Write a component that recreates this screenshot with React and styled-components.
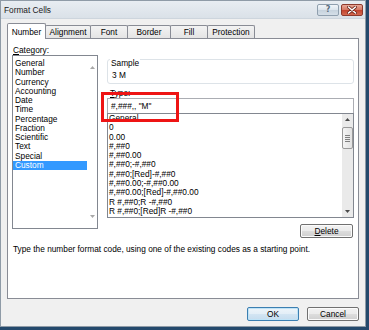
import React from "react"
import styled, { createGlobalStyle } from "styled-components"

const GlobalStyle = createGlobalStyle`
  html, body {
    margin: 0;
    padding: 0;
    background: #24496c;
  }
  body {
    font-family: "Liberation Sans", Arial, sans-serif;
    font-size: 8.3px;
    color: #000;
  }
  * { box-sizing: border-box; }
`

const tabs = [
  { title: "Number", width: 39, active: true },
  { title: "Alignment", width: 46 },
  { title: "Font", width: 38 },
  { title: "Border", width: 44 },
  { title: "Fill", width: 38 },
  { title: "Protection", width: 48 },
]

const categories = [
  "General", "Number", "Currency", "Accounting", "Date", "Time",
  "Percentage", "Fraction", "Scientific", "Text", "Special", "Custom",
]

const formats = [
  "General",
  "0",
  "0.00",
  "#,##0",
  "#,##0.00",
  "#,##0;-#,##0",
  "#,##0;[Red]-#,##0",
  "#,##0.00;-#,##0.00",
  "#,##0.00;[Red]-#,##0.00",
  "R #,##0;R -#,##0",
  "R #,##0;[Red]R -#,##0",
]

const Arrow = ({ down, faint }) => (
  <svg width="5" height="3" viewBox="0 0 5 3">
    <path
      d={down ? "M0 0 L5 0 L2.5 3 Z" : "M0 3 L5 3 L2.5 0 Z"}
      fill={faint ? "#a8a8a8" : "#4a4a4a"}
    />
  </svg>
)

const App = () => {
  return (
    <Screen>
      <GlobalStyle />
      <Window>
        <TitleBar>
          <Title>Format Cells</Title>
          <Caption>
            <CapButton>?</CapButton>
            <CapButton close>
              <svg width="10" height="8" viewBox="0 0 10 8">
                <path d="M1.5 1 L8.5 7 M8.5 1 L1.5 7" stroke="#6b2318" strokeWidth="3" strokeLinecap="round" />
                <path d="M1.5 1 L8.5 7 M8.5 1 L1.5 7" stroke="#fff" strokeWidth="1.6" strokeLinecap="round" />
              </svg>
            </CapButton>
          </Caption>
        </TitleBar>

        <Body>
          <Tabs>
            {tabs.map((t) => (
              <Tab key={t.title} $width={t.width} $active={t.active}>{t.title}</Tab>
            ))}
          </Tabs>

          <Panel>
            <Columns>
              <LeftCol>
                <Label><u>C</u>ategory:</Label>
                <CategoryBox>
                  <Items>
                    {categories.map((c) => (
                      <CategoryItem key={c} $selected={c === "Custom"}>{c}</CategoryItem>
                    ))}
                  </Items>
                  <BlankScroll>
                    <ArrowCell><Arrow faint /></ArrowCell>
                    <ArrowCell><Arrow faint down /></ArrowCell>
                  </BlankScroll>
                </CategoryBox>
              </LeftCol>

              <RightCol>
                <GroupBox>
                  <Legend>Sample</Legend>
                  <SampleValue>3 M</SampleValue>
                </GroupBox>
                <TypeLabel><u>T</u>ype:</TypeLabel>
                <TypeInput>#,###,, "M"</TypeInput>
                <FormatBox>
                  <Items>
                    {formats.map((f) => (
                      <FormatItem key={f}>{f}</FormatItem>
                    ))}
                  </Items>
                  <ScrollBar>
                    <ArrowCell><Arrow /></ArrowCell>
                    <Thumb>
                      <Grip /><Grip /><Grip /><Grip />
                    </Thumb>
                    <Spacer />
                    <ArrowCell><Arrow down /></ArrowCell>
                  </ScrollBar>
                </FormatBox>
                <DeleteButton><u>D</u>elete</DeleteButton>
              </RightCol>
            </Columns>

            <Hint>Type the number format code, using one of the existing codes as a starting point.</Hint>

            <Callout />
          </Panel>

          <Footer>
            <Button $default>OK</Button>
            <Button>Cancel</Button>
          </Footer>
        </Body>
      </Window>
    </Screen>
  )
}

export default App

const Screen = styled.div`
  width: 369px;
  height: 330px;
  overflow: hidden;
  background: #24496c;
`

const Window = styled.div`
  width: 366px;
  height: 327px;
  border: 1px solid #8f9ba7;
  background: #f0f0f0;
  display: flex;
  flex-direction: column;
`

const TitleBar = styled.div`
  height: 18px;
  display: flex;
  justify-content: space-between;
  background: linear-gradient(#e8edf2, #dae1e8);
  border-bottom: 1px solid #cdd5dd;
`

const Title = styled.div`
  padding: 5px 0 0 3px;
  font-size: 8.3px;
  line-height: 9px;
  color: #1a1a1a;
`

const Caption = styled.div`
  display: flex;
  gap: 2px;
  padding: 3px 2px 0 0;
`

const CapButton = styled.div`
  width: 22px;
  height: 12px;
  border: 1px solid ${(p) => (p.close ? "#8d3a2d" : "#8f9fae")};
  border-radius: 2px;
  background: ${(p) =>
    p.close
      ? "linear-gradient(#e8a898, #d67a66 45%, #c3452f 55%, #d3684f)"
      : "linear-gradient(#f1f5f9, #dde6ee 45%, #c7d3de 55%, #d5dfe8)"};
  display: flex;
  align-items: center;
  justify-content: center;
  font-family: "DejaVu Sans", sans-serif;
  font-weight: bold;
  font-size: 8px;
  line-height: 8px;
  color: #5b6d7d;
`

const Body = styled.div`
  padding: 4px 6px 0;
`

const Tabs = styled.div`
  display: flex;
  align-items: flex-end;
  height: 15px;
`

const Tab = styled.div`
  width: ${(p) => p.$width}px;
  height: ${(p) => (p.$active ? 16 : 13)}px;
  margin-right: -1px;
  margin-bottom: ${(p) => (p.$active ? -1 : 0)}px;
  padding-top: ${(p) => (p.$active ? 4 : 2)}px;
  position: relative;
  z-index: ${(p) => (p.$active ? 2 : 1)};
  border: 1px solid #898c95;
  border-bottom: none;
  border-radius: 2px 2px 0 0;
  background: ${(p) => (p.$active ? "#fff" : "linear-gradient(#f3f3f3, #e4e4e4)")};
  text-align: center;
  line-height: 8px;
`

const Panel = styled.div`
  position: relative;
  height: 261px;
  border: 1px solid #898c95;
  background: #fff;
  padding: 6px 4px 0;
`

const Columns = styled.div`
  display: flex;
  gap: 9px;
  align-items: flex-start;
`

const LeftCol = styled.div`
  width: 86px;
  display: flex;
  flex-direction: column;
`

const RightCol = styled.div`
  width: 247px;
  display: flex;
  flex-direction: column;
`

const Label = styled.div`
  height: 10px;
  line-height: 10px;
  padding-left: 1px;
`

const TypeLabel = styled(Label)`
  margin-top: 4px;
  padding-left: 3px;
`

const CategoryBox = styled.div`
  height: 174px;
  border: 1px solid #828790;
  display: flex;
`

const Items = styled.div`
  flex: 1;
  min-width: 0;
  overflow: hidden;
`

const CategoryItem = styled.div`
  height: 9.25px;
  line-height: 9.25px;
  padding-left: 2px;
  margin-top: ${(p) => (p.$first ? 3 : 0)}px;
  background: ${(p) => (p.$selected ? "#3399ff" : "transparent")};
  color: ${(p) => (p.$selected ? "#fff" : "#000")};
  white-space: nowrap;
  &:first-child {
    margin-top: 3px;
  }
`

const BlankScroll = styled.div`
  width: 10px;
  display: flex;
  flex-direction: column;
  justify-content: space-between;
  padding: 6px 0 6px;
`

const ArrowCell = styled.div`
  height: 11px;
  display: flex;
  align-items: center;
  justify-content: center;
`

const GroupBox = styled.div`
  position: relative;
  margin-top: 14px;
  height: 25px;
  border: 1px solid #dde3e8;
  border-radius: 3px;
  padding: 11px 0 0 4px;
`

const Legend = styled.span`
  position: absolute;
  top: -1px;
  left: 2px;
  padding: 0 1px;
  background: #fff;
  line-height: 8px;
`

const SampleValue = styled.div`
  line-height: 8px;
`

const TypeInput = styled.div`
  height: 15px;
  border: 1px solid #abadb3;
  border-bottom: none;
  padding-left: 3px;
  line-height: 14px;
  white-space: pre;
`

const FormatBox = styled.div`
  height: 105px;
  border: 1px solid #828790;
  display: flex;
`

const FormatItem = styled.div`
  height: 9.3px;
  line-height: 9.3px;
  padding-left: 1px;
  white-space: nowrap;
`

const ScrollBar = styled.div`
  width: 11px;
  background: #eaeaea;
  display: flex;
  flex-direction: column;
`

const Thumb = styled.div`
  margin-top: 2px;
  height: 22px;
  border: 1px solid #9a9a9a;
  border-radius: 2px;
  background: linear-gradient(90deg, #f4f4f4, #e2e2e2);
  display: flex;
  flex-direction: column;
  justify-content: center;
  align-items: center;
  gap: 1px;
`

const Grip = styled.div`
  width: 5px;
  height: 1px;
  background: #7f7f7f;
`

const Spacer = styled.div`
  flex: 1;
`

const Button = styled.div`
  width: 52px;
  height: 14px;
  border: 1px solid ${(p) => (p.$default ? "#3c7fb1" : "#707070")};
  border-radius: 2px;
  background: ${(p) =>
    p.$default
      ? "linear-gradient(#eef5fa, #e3eef7 50%, #d3e5f3 51%, #c6dcee)"
      : "linear-gradient(#f2f2f2, #ebebeb 50%, #dddddd 51%, #cfcfcf)"};
  box-shadow: inset 0 0 0 1px ${(p) => (p.$default ? "#bfe3f7" : "#fbfbfb")};
  text-align: center;
  line-height: 12px;
`

const DeleteButton = styled(Button)`
  align-self: flex-end;
  margin: 6px 1px 0 0;
  width: 53px;
`

const Hint = styled.div`
  margin-top: 7px;
  padding-left: 1px;
  line-height: 9px;
  white-space: nowrap;
`

const Callout = styled.div`
  position: absolute;
  left: 93px;
  top: 53px;
  width: 78px;
  height: 30px;
  border: 3px solid #ee1414;
  z-index: 3;
  pointer-events: none;
`

const Footer = styled.div`
  display: flex;
  justify-content: flex-end;
  gap: 8px;
  margin-top: 8px;
`
